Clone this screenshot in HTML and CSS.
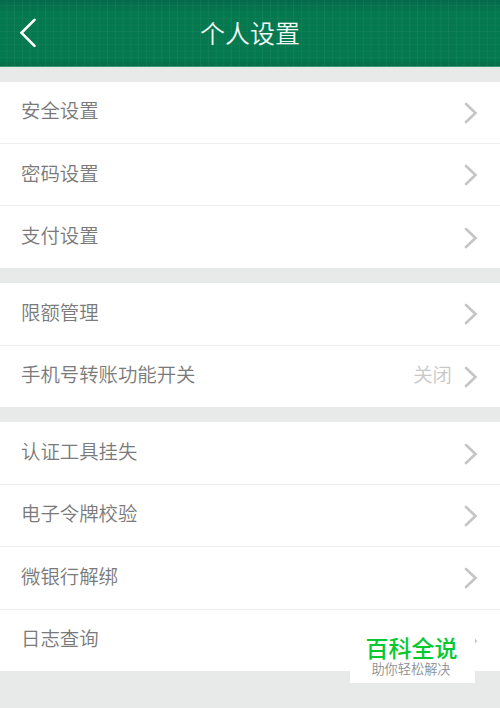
FILE: index.html
```html
<!DOCTYPE html>
<html lang="zh-CN">
<head>
  <meta charset="UTF-8">
  <meta name="viewport" content="width=device-width, initial-scale=1.0">
  <title>个人设置</title>
  <link rel="stylesheet" href="styles.css">
</head>
<body>
  <svg class="icons">
    <symbol id="arrow" viewBox="0 0 14 22">
      <path d="M2 2L11.5 11L2 20" />
    </symbol>
  </svg>

  <header class="header">
    <svg class="back" viewBox="0 0 18 30"><path d="M15.5 1.8L2.5 14.8L15.5 27.8" /></svg>
    <h1>个人设置</h1>
  </header>

  <main>
    <ul class="group">
      <li class="row"><span class="label">安全设置</span><svg class="arrow"><use href="#arrow" /></svg></li>
      <li class="row"><span class="label">密码设置</span><svg class="arrow"><use href="#arrow" /></svg></li>
      <li class="row"><span class="label">支付设置</span><svg class="arrow"><use href="#arrow" /></svg></li>
    </ul>

    <ul class="group">
      <li class="row"><span class="label">限额管理</span><svg class="arrow"><use href="#arrow" /></svg></li>
      <li class="row"><span class="label">手机号转账功能开关</span><span class="value">关闭</span><svg class="arrow"><use href="#arrow" /></svg></li>
    </ul>

    <ul class="group">
      <li class="row"><span class="label">认证工具挂失</span><svg class="arrow"><use href="#arrow" /></svg></li>
      <li class="row"><span class="label">电子令牌校验</span><svg class="arrow"><use href="#arrow" /></svg></li>
      <li class="row"><span class="label">微银行解绑</span><svg class="arrow"><use href="#arrow" /></svg></li>
      <li class="row"><span class="label">日志查询</span><svg class="arrow"><use href="#arrow" /></svg></li>
    </ul>
  </main>

  <div class="badge">
    <strong>百科全说</strong>
    <span>助你轻松解决</span>
  </div>
</body>
</html>
```
FILE: styles.css
```css
/* General Styles */
* {
  box-sizing: border-box;
}

body {
  position: relative;
  margin: 0;
  height: 708px;
  overflow: hidden;
  background: #e8eaea;
  color: #7a7a7a;
  font-family: 'Noto Sans CJK SC', sans-serif;
  font-weight: 350;
}

.icons {
  display: none;
}

/* Header */
.header {
  display: grid;
  grid-template-columns: 60px 1fr 60px;
  align-items: center;
  height: 67px;
  border-bottom: 1px solid #419a76;
  background:
    repeating-linear-gradient(90deg, transparent 0 6px, rgba(255, 255, 255, 0.05) 6.8px, transparent 7.75px),
    repeating-linear-gradient(transparent 0 4.8px, rgba(255, 255, 255, 0.04) 5.6px, transparent 6.5px),
    linear-gradient(#04694a, #04784e 12px, #04784e 60px, #046b48);
}

.header h1 {
  margin: 0;
  padding-bottom: 2px;
  color: #f2f8f5;
  font-size: 25px;
  font-weight: 350;
  line-height: 36px;
  text-align: center;
}

.back {
  width: 18px;
  height: 30px;
  margin-left: 19px;
  fill: none;
  stroke: #fff;
  stroke-width: 2.6;
  stroke-linecap: round;
}

/* Settings list */
main {
  padding-top: 14.6px;
}

.group {
  margin: 0 0 15px;
  padding: 0;
  list-style: none;
  background: #fff;
}

.row {
  display: flex;
  align-items: center;
  height: 62.4px;
  padding: 0 22px 0 21px;
  border-bottom: 1px solid #efefef;
}

.row:last-child {
  height: 61.8px;
  border-bottom: 0;
}

.label {
  flex: 1;
  font-size: 19.4px;
  line-height: 28px;
  padding-bottom: 4px;
}

.value {
  margin-right: 12px;
  padding-bottom: 4px;
  color: #c8c8c8;
  font-size: 19.4px;
  line-height: 28px;
}

.arrow {
  width: 14px;
  height: 22px;
  margin-top: 1px;
  fill: none;
  stroke: #c6c6c6;
  stroke-width: 2.7;
  stroke-linecap: round;
}

/* Badge over the last row */
.badge {
  position: absolute;
  left: 350px;
  top: 628px;
  width: 125px;
  height: 55px;
  padding-top: 6px;
  background: #fff;
  text-align: center;
}

.badge strong {
  display: block;
  margin-left: -2px;
  color: #07c82f;
  font-size: 23px;
  font-weight: 500;
  line-height: 26px;
}

.badge span {
  display: block;
  margin-left: -3px;
  color: #8f8f8f;
  font-size: 13.2px;
  line-height: 18px;
}
```
